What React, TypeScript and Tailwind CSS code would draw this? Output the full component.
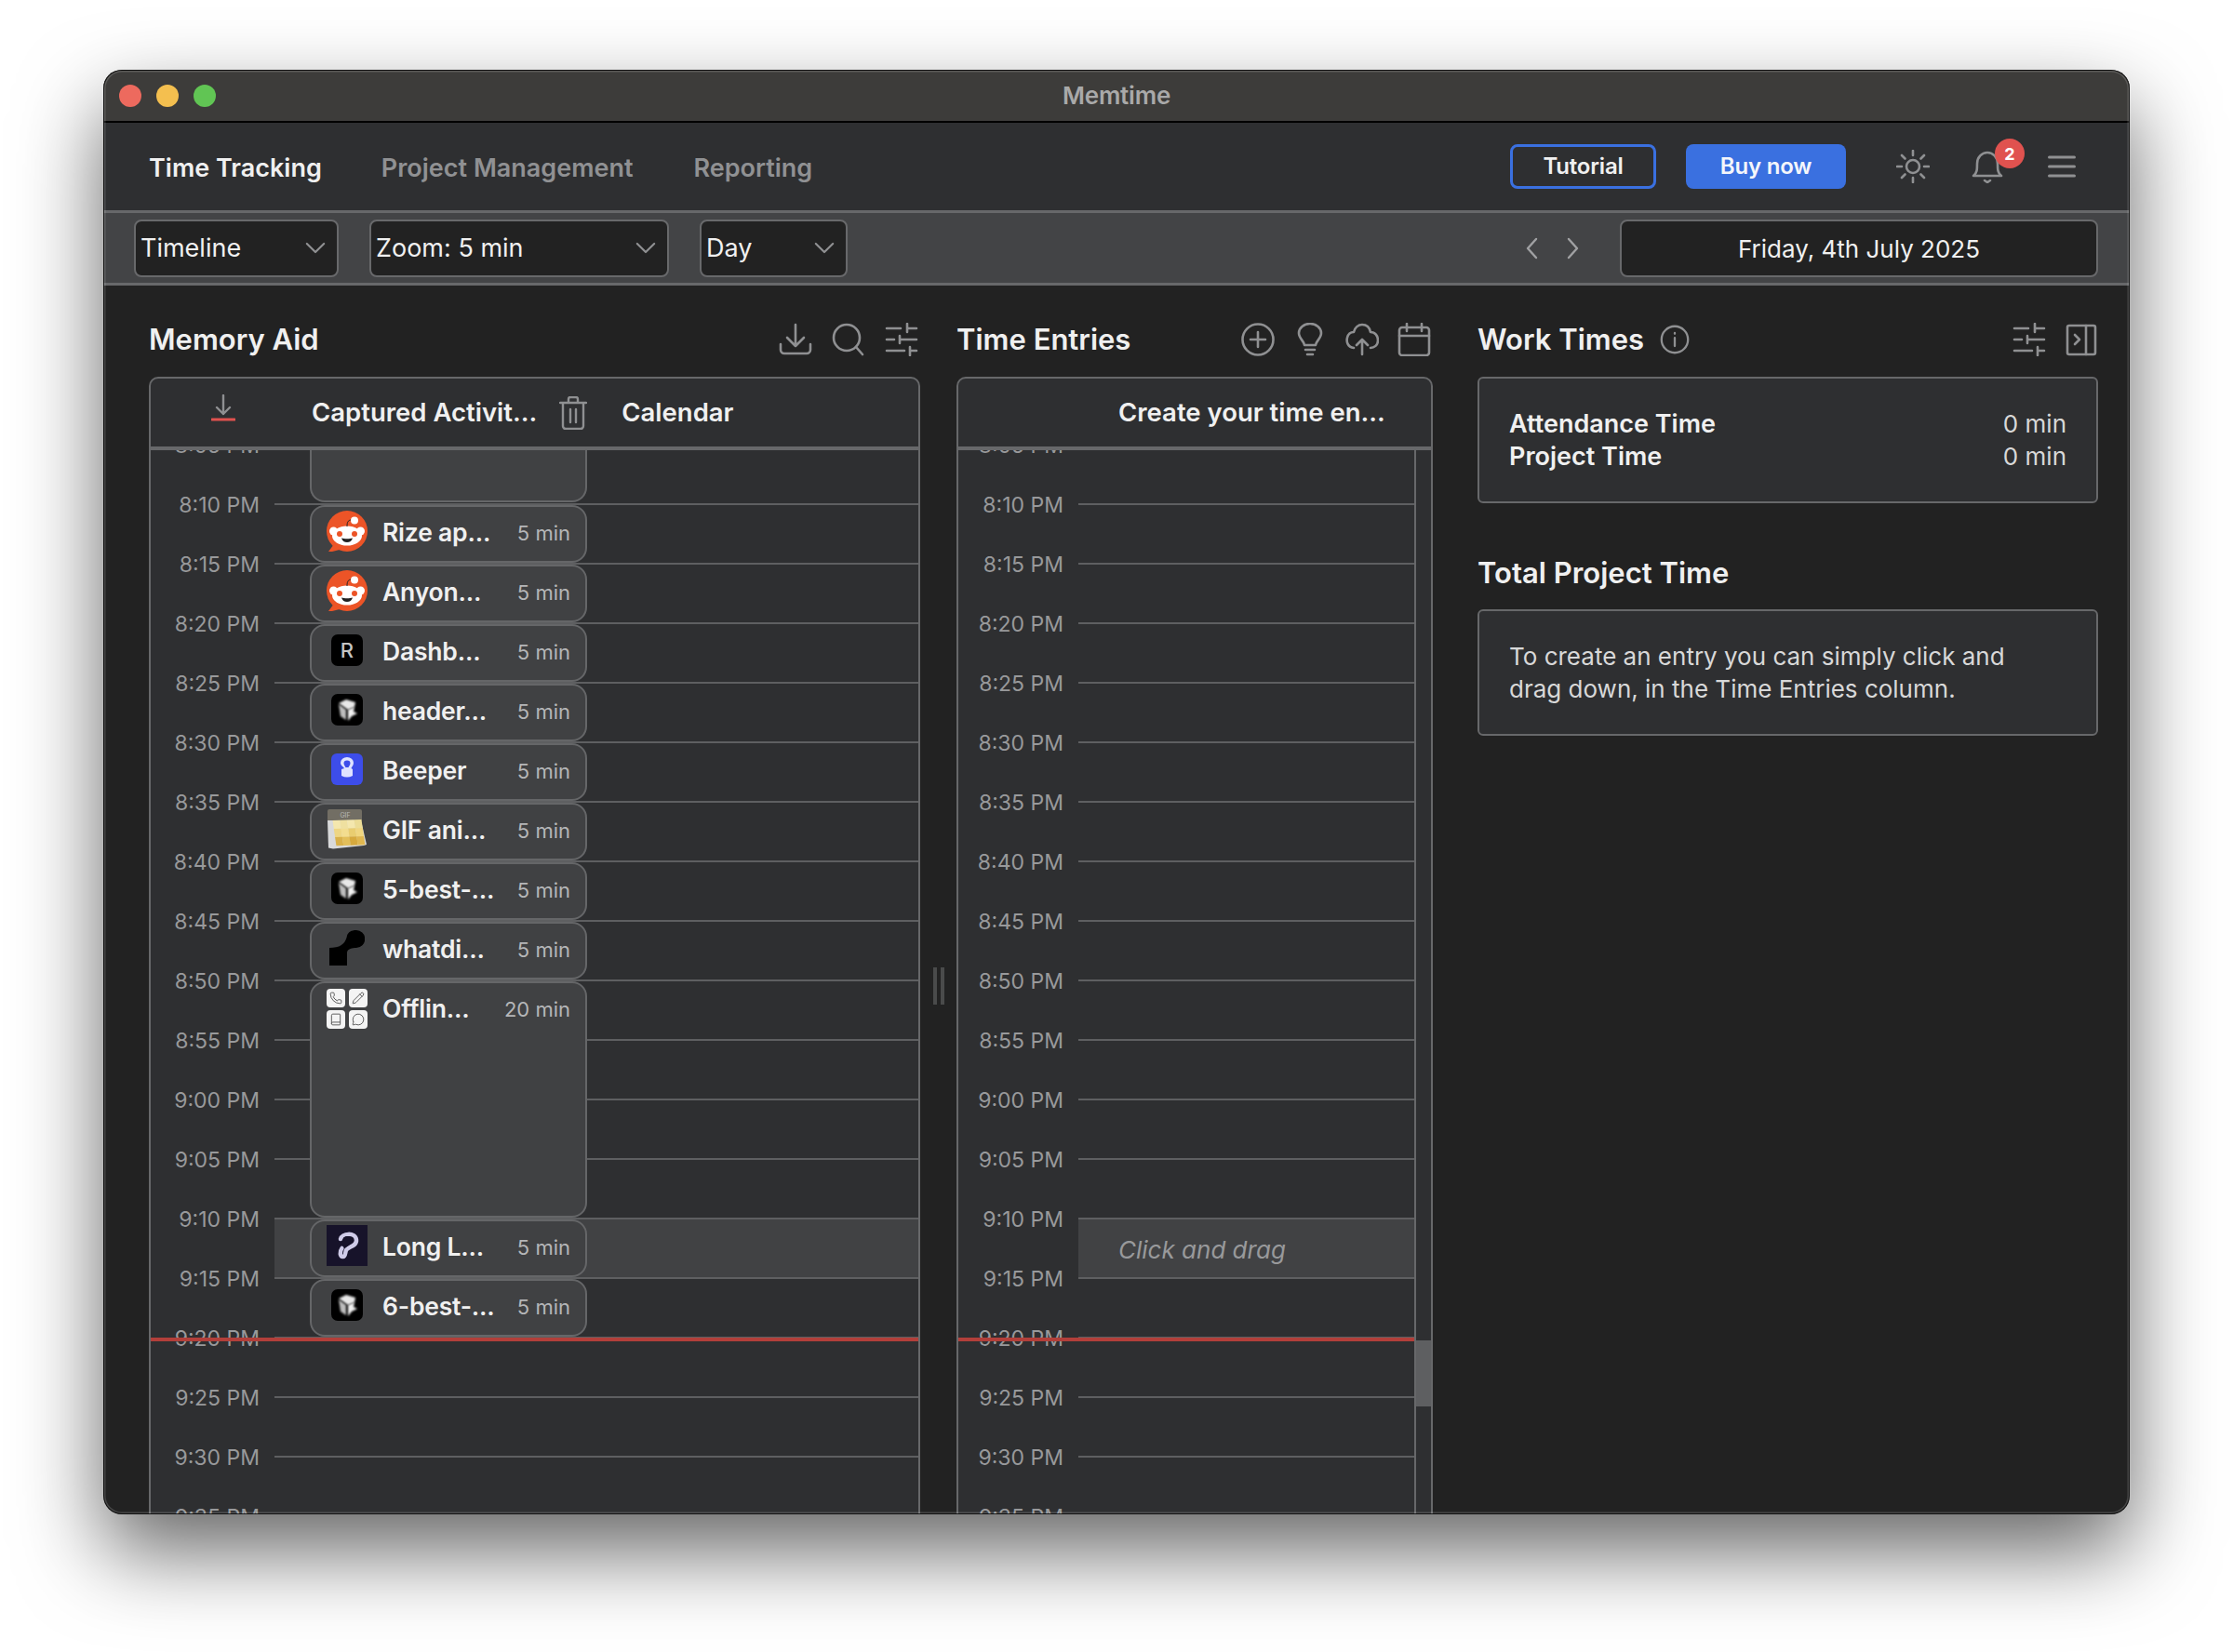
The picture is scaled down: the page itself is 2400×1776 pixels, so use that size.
import { ReactNode } from 'react';
import { Book, MessageCircle, Pencil, Phone } from 'lucide-react';

const FONT = "font-['Inter','Noto_Sans',sans-serif]";

const times = [
  '8:05 PM', '8:10 PM', '8:15 PM', '8:20 PM', '8:25 PM', '8:30 PM', '8:35 PM', '8:40 PM', '8:45 PM', '8:50 PM',
  '8:55 PM', '9:00 PM', '9:05 PM', '9:10 PM', '9:15 PM', '9:20 PM', '9:25 PM', '9:30 PM', '9:35 PM',
];

// pixel colours of the tilted page in the GIF app icon
const gifCells = [
  ['#f4e7ae', '#efe0a0', '#f4e7ae', '#ecdc96'],
  ['#eed684', '#f3dd8f', '#e9cd70', '#f0d680'],
  ['#d9b14a', '#e3bf5a', '#d6a93d', '#e0b750'],
];

function Svg({ children, className = 'w-9 h-9' }: { children: ReactNode; className?: string }) {
  return (
    <svg viewBox="0 0 36 36" fill="none" stroke="#8f9092" strokeWidth={2.6} strokeLinecap="round" strokeLinejoin="round" className={className}>
      {children}
    </svg>
  );
}

function SlidersIcon() {
  return (
    <Svg>
      <path d="M2 6h15M24 6h10M24 1v9M2 18h8M16 18h18M16 14v8M2 30h19M27 30h7M27 26v9" />
    </Svg>
  );
}

function DownloadIcon() {
  return (
    <Svg>
      <path d="M18 2v23M9 16l9 9 9-9M2 23v6a4 4 0 0 0 4 4h24a4 4 0 0 0 4-4v-6" />
    </Svg>
  );
}

function SearchIcon() {
  return (
    <Svg>
      <circle cx="16" cy="16" r="14" />
      <path d="M26 26l7 8" />
    </Svg>
  );
}

function ChevronDownIcon() {
  return (
    <svg viewBox="0 0 24 14" fill="none" stroke="#8f9092" strokeWidth={2.4} strokeLinecap="round" strokeLinejoin="round" className="w-[22px] h-[13px]">
      <path d="M2 2l10 10L22 2" />
    </svg>
  );
}

function Select({ label, width }: { label: string; width: string }) {
  return (
    <div className={`${width} h-[62px] flex items-center justify-between pl-[5px] pr-3 rounded-lg bg-[#222222] border-2 border-[#68696b] text-[27px] text-[#f0f0f0]`}>
      <span className="pt-[2px]">{label}</span>
      <ChevronDownIcon />
    </div>
  );
}

function RedditIcon() {
  return (
    <svg viewBox="0 0 44 44" className="w-11 h-11 shrink-0">
      <circle cx="22" cy="22" r="22" fill="#ec5427" />
      <path d="M2 44l6-8 6 6-8 2z" fill="#ec5427" />
      <circle cx="7.500" cy="22" r="4.500" fill="#fff" />
      <circle cx="36.500" cy="22" r="4.500" fill="#fff" />
      <ellipse cx="22" cy="27" rx="16" ry="10.500" fill="#fff" />
      <path d="M22 17c0-5 1-8 8-7" stroke="#222" strokeWidth="1" fill="none" />
      <circle cx="30" cy="10.500" r="4" fill="#fff" />
      <circle cx="14" cy="25" r="3" fill="#ec5427" />
      <circle cx="30" cy="25" r="3" fill="#ec5427" />
      <path d="M16 29.500c3 1 9 1 12 0-1 3-3 4.500-6 4.500s-5-1.500-6-4.500z" fill="#222" />
    </svg>
  );
}

function CubeIcon() {
  return (
    <div className="w-11 h-11 shrink-0 flex items-center justify-center">
      <svg viewBox="0 0 34 34" className="w-[34px] h-[34px]">
        <rect width="34" height="34" rx="7" fill="#000" />
        <path d="M8 10l8-4 10 3-1 5-7 3z" fill="#e8e8e8" className="blur-[0.8px]" />
        <path d="M8 11l8 6v11l-6-4z" fill="#bdbdbd" className="blur-[0.8px]" />
        <path d="M18 17l7-3-1 5 4 2-6 3-4 5z" fill="#f0f0f0" className="blur-[0.8px]" />
      </svg>
    </div>
  );
}

function AppIcon({ kind }: { kind: string }) {
  if (kind === 'reddit') return <RedditIcon />;
  if (kind === 'cube') return <CubeIcon />;
  if (kind === 'rize') {
    return (
      <div className="w-11 h-11 shrink-0 flex items-center justify-center">
        <div className="w-[34px] h-[34px] rounded-[7px] bg-black text-[#c4c4c4] text-[22px] font-medium flex items-center justify-center">R</div>
      </div>
    );
  }
  if (kind === 'beeper') {
    return (
      <svg viewBox="0 0 44 44" className="w-11 h-11 shrink-0">
        <rect x="5" y="5" width="34" height="34" rx="6" fill="#3d4dea" />
        <path d="M15 15a7 6 0 0 1 14 0c0 3-2 4-2.500 6l1.500 1v7c-4 2-8 2-12 0v-7l3-1c-1-2-4-3-4-6z" fill="#dfe3ff" />
        <path d="M18.500 15.500a3.500 3 0 0 1 7 0c0 2-1.500 3-2 4.500h-3c-.5-1.500-2-2.500-2-4.500z" fill="#3d4dea" />
      </svg>
    );
  }
  if (kind === 'gif') {
    return (
      <svg viewBox="0 0 44 44" className="w-11 h-11 shrink-0">
        <path d="M1 13h36l6 26-3 1-33 3.500-5-1z" fill="#d9dadb" />
        <path d="M1 3a2 2 0 0 1 2-2h33a2 2 0 0 1 2 2v10H1z" fill="#726e64" />
        <text x="20" y="10" fontSize="7" fill="#b9b9b6" textAnchor="middle" fontFamily="Inter, sans-serif">GIF</text>
        <g transform="matrix(7.700 -0.250 1.300 9 6.500 13)">
          {gifCells.map((row, y) => row.map((fill, x) => <rect key={`${x}-${y}`} x={x} y={y} width="1.020" height="1.020" fill={fill} />))}
        </g>
      </svg>
    );
  }
  if (kind === 'whatdid') {
    return (
      <div className="w-11 h-11 shrink-0 flex items-center justify-center">
        <svg viewBox="0 0 38 38" className="w-[38px] h-[38px]">
          <path d="M0 19c10 0 17-3 19-13 1-4 5-6 9.500-6a9.500 9.500 0 0 1 .5 19c-4 0-10 1-10 5v14H0z" fill="#000" />
        </svg>
      </div>
    );
  }
  if (kind === 'offline') {
    const tiles = [Phone, Pencil, Book, MessageCircle];
    return (
      <div className="w-11 h-11 shrink-0 grid grid-cols-2 gap-[3px] content-start mt-[2px]">
        {tiles.map((Tile, i) => (
          <div key={i} className="w-[20px] h-[20px] rounded-[4px] bg-[#f4f4f4] flex items-center justify-center">
            <Tile size={14} color="#555" strokeWidth={1.6} />
          </div>
        ))}
      </div>
    );
  }
  return (
    <svg viewBox="0 0 44 44" className="w-11 h-11 shrink-0">
      <rect width="44" height="44" fill="#17132a" />
      <path d="M15 15c1-6 16-8 17 1 .6 7-9 7-11 11-1 2-.5 7-3.500 7-3 0-4-5-1-9" stroke="#cfcbe8" strokeWidth="4.500" fill="none" strokeLinecap="round" />
      <path d="M19 14c3-2 8-1 8 2.500S22 21 19.500 24" stroke="#17132a" strokeWidth="1.800" fill="none" strokeLinecap="round" />
    </svg>
  );
}

function Block({ name, dur, icon, height }: { name: string; dur: string; icon: string; height: string }) {
  return (
    <div className={`${height} mb-[2px] rounded-[16px] border-2 border-[#656668] bg-[#404143] pl-[16px] pr-[16px] pt-[4px] flex items-start gap-[16px]`}>
      <AppIcon kind={icon} />
      <div className="h-11 mt-[2px] flex-1 flex items-center justify-between whitespace-nowrap">
        <span className="text-[26.500px] font-semibold text-[#f0f0f0] tracking-[-0.2px]">{name}</span>
        <span className="text-[22px] text-[#b5b6b8]">{dur}</span>
      </div>
    </div>
  );
}

function TimeRows({ gutter, pad }: { gutter: string; pad: string }) {
  return (
    <div className="-mt-[7px]">
      {times.map((t) => (
        <div key={t} className="flex h-[64px]">
          <div className={`${gutter} ${pad} shrink-0 text-right text-[23px] leading-[34px] -mt-[15px] text-[#98999b]`}>{t}</div>
          <div className={`flex-1 border-t-2 border-[#5e5f61] ${t === '9:10 PM' ? 'bg-[#414244]' : ''}`} />
        </div>
      ))}
    </div>
  );
}

function RedLine() {
  return <div className="absolute left-0 right-0 top-[954px] h-[4px] bg-[#b23f3a]" />;
}

function PanelHead({ children }: { children: ReactNode }) {
  return (
    <div className="h-[79px] shrink-0 rounded-t-[10px] border-2 border-b-4 border-[#67686a] bg-[#2e2f31] flex items-center text-[27.500px] font-semibold text-[#f0f0f0] whitespace-nowrap">
      {children}
    </div>
  );
}

function Heading({ children }: { children: ReactNode }) {
  return <h2 className="text-[31px] font-semibold text-[#f0f0f0]">{children}</h2>;
}

export default function App() {
  return (
    <div className={`${FONT} h-[1776px] w-[2400px] bg-white overflow-hidden pl-[111px] pt-[75px]`}>
      <div className="relative w-[2178px] h-[1553px] rounded-[20px] overflow-hidden flex flex-col bg-[#222222] shadow-[0_40px_90px_rgba(0,0,0,0.6)]">
        {/* Title bar */}
        <div className="h-[57px] shrink-0 bg-[#3d3c3a] border-b-2 border-black relative flex items-center justify-center">
          <div className="absolute left-[17px] flex gap-[16px]">
            <span className="w-6 h-6 rounded-full bg-[#ed6a5e]" />
            <span className="w-6 h-6 rounded-full bg-[#f4bf4f]" />
            <span className="w-6 h-6 rounded-full bg-[#61c554]" />
          </div>
          <span className="text-[26px] font-semibold text-[#a9a9a9] tracking-[-0.2px]">Memtime</span>
        </div>

        {/* Nav */}
        <div className="h-[94px] shrink-0 bg-[#2e2f31] flex items-center pl-[49px] pr-[58px] text-[27px] font-semibold">
          <span className="pt-[5px] text-[#f0f0f0]">Time Tracking</span>
          <span className="pt-[5px] ml-[64px] text-[#909193]">Project Management</span>
          <span className="pt-[5px] ml-[65px] text-[#909193]">Reporting</span>
          <div className="ml-auto flex items-center">
            <button className="w-[157px] h-[48px] rounded-lg border-[3px] border-[#3a70e0] text-[24px] tracking-[-0.2px] text-[#f0f0f0]">Tutorial</button>
            <button className="ml-[32px] w-[172px] h-[48px] rounded-lg bg-[#3a70e0] text-[24px] tracking-[-0.2px] text-[#f4f6fb]">Buy now</button>
            <div className="ml-[54px]">
              <Svg>
                <circle cx="18" cy="18" r="7" />
                <path d="M18 1v5M18 30v5M1 18h5M30 18h5M6 6l3.500 3.500M26.500 26.500L30 30M6 30l3.500-3.500M26.500 9.500L30 6" />
              </Svg>
            </div>
            <div className="relative ml-[44px]">
              <Svg>
                <path d="M3 28c4-3 4-7 4-13 0-7 5-12 11-12s11 5 11 12c0 6 0 10 4 13zM15 33l3 2 3-2" />
              </Svg>
              <span className="absolute -top-[12px] left-[26px] w-8 h-8 rounded-full bg-[#e0524f] text-white text-[18px] font-bold flex items-center justify-center">2</span>
            </div>
            <svg viewBox="0 0 30 24" className="ml-[47px] w-[30px] h-[24px]" stroke="#8f9092" strokeWidth={3} strokeLinecap="round">
              <path d="M1.500 2h27M1.500 12h27M1.500 22h27" />
            </svg>
          </div>
        </div>

        {/* Toolbar */}
        <div className="h-[81px] shrink-0 bg-[#434446] border-y-[3px] border-[#67686a] flex items-center pl-[33px] pr-[34px]">
          <div className="flex gap-[33px]">
            <Select label="Timeline" width="w-[220px]" />
            <Select label="Zoom: 5 min" width="w-[322px]" />
            <Select label="Day" width="w-[159px]" />
          </div>
          <div className="ml-auto flex items-center">
            <svg viewBox="0 0 60 26" className="w-[60px] h-[26px]" fill="none" stroke="#a0a1a3" strokeWidth={2.4} strokeLinecap="round" strokeLinejoin="round">
              <path d="M12 3L3 13l9 10M47 3l9 10-9 10" />
            </svg>
            <div className="ml-[42px] w-[514px] h-[62px] pt-[1px] rounded-lg bg-[#222222] border-2 border-[#68696b] flex items-center justify-center text-[26px] text-[#f0f0f0]">
              Friday, 4th July 2025
            </div>
          </div>
        </div>

        {/* Main */}
        <div className="flex-1 min-h-0 flex pl-[49px] pr-[34px]">
          {/* Memory Aid */}
          <div className="w-[829px] flex flex-col min-h-0">
            <div className="h-[98px] shrink-0 pt-[18px] flex items-center">
              <Heading>Memory Aid</Heading>
              <div className="ml-auto flex items-center gap-[21px] mr-[2px]">
                <DownloadIcon />
                <SearchIcon />
                <SlidersIcon />
              </div>
            </div>
            <PanelHead>
              <svg viewBox="0 0 26 30" className="ml-[65px] mb-[10px] w-[26px] h-[30px]" fill="none" strokeWidth={2.4} strokeLinecap="round" strokeLinejoin="round">
                <path d="M13 1v20M6 14l7 7 7-7" stroke="#8f9092" />
                <path d="M1 27h24" stroke="#e0524f" strokeWidth={3} />
              </svg>
              <span className="ml-[82px]">Captured Activit...</span>
              <svg viewBox="0 0 30 36" className="ml-[24px] w-[30px] h-[36px]" fill="none" stroke="#8f9092" strokeWidth={2.4} strokeLinecap="round" strokeLinejoin="round">
                <path d="M1 7h28M10 7V3a2 2 0 0 1 2-2h6a2 2 0 0 1 2 2v4M4 7v25a3 3 0 0 0 3 3h16a3 3 0 0 0 3-3V7M12 14v14M18 14v14" />
              </svg>
              <span className="ml-[37px]">Calendar</span>
            </PanelHead>
            <div className="relative flex-1 min-h-0 overflow-hidden border-x-2 border-[#67686a] bg-[#2e2f31]">
              <TimeRows gutter="w-[133px]" pad="pr-[16px]" />
              <div className="absolute left-[171px] top-0 w-[298px]">
                <div className="h-[58px] -mt-[2px] mb-[3px] rounded-b-[16px] border-2 border-t-0 border-[#656668] bg-[#404143]" />
                <Block name="Rize ap..." dur="5 min" icon="reddit" height="h-[62px]" />
                <Block name="Anyon..." dur="5 min" icon="reddit" height="h-[62px]" />
                <Block name="Dashb..." dur="5 min" icon="rize" height="h-[62px]" />
                <Block name="header..." dur="5 min" icon="cube" height="h-[62px]" />
                <Block name="Beeper" dur="5 min" icon="beeper" height="h-[62px]" />
                <Block name="GIF ani..." dur="5 min" icon="gif" height="h-[62px]" />
                <Block name="5-best-..." dur="5 min" icon="cube" height="h-[62px]" />
                <Block name="whatdi..." dur="5 min" icon="whatdid" height="h-[62px]" />
                <Block name="Offlin..." dur="20 min" icon="offline" height="h-[254px]" />
                <Block name="Long L..." dur="5 min" icon="long" height="h-[62px]" />
                <Block name="6-best-..." dur="5 min" icon="cube" height="h-[62px]" />
              </div>
              <RedLine />
            </div>
          </div>

          {/* Resize handle */}
          <div className="w-[39px] shrink-0 flex justify-center">
            <div className="mt-[733px] w-[12px] h-[40px] border-x-[4px] border-[#4a4b4b]" />
          </div>

          {/* Time Entries */}
          <div className="w-[512px] flex flex-col min-h-0">
            <div className="h-[98px] shrink-0 pt-[18px] flex items-center">
              <Heading>Time Entries</Heading>
              <div className="ml-auto flex items-center gap-[20px] mr-[2px]">
                <Svg>
                  <circle cx="18" cy="18" r="16.500" />
                  <path d="M18 10v16M10 18h16" />
                </Svg>
                <Svg>
                  <path d="M12 24c0-4-6-7-6-13a12 10 0 0 1 24 0c0 6-6 9-6 13zM13 29h10M15 34h6" />
                </Svg>
                <Svg>
                  <path d="M9 27C2 26 1 20 2 16c1-4 4-6 7-6 1-5 5-8 9-8 5 0 8 3 9 8 5 0 8 4 8 9s-4 8-8 8M18 34V18M12 24l6-6 6 6" />
                </Svg>
                <Svg>
                  <rect x="2" y="5" width="32" height="30" rx="3" />
                  <path d="M2 14h32M10 1v8M26 1v8" />
                </Svg>
              </div>
            </div>
            <PanelHead>
              <span className="ml-[172px]">Create your time en...</span>
            </PanelHead>
            <div className="flex-1 min-h-0 flex border-x-2 border-[#67686a] bg-[#2e2f31]">
              <div className="relative flex-1 min-w-0 overflow-hidden border-r-2 border-[#67686a]">
                <TimeRows gutter="w-[129px]" pad="pr-[16px]" />
                <div className="absolute left-[129px] right-0 top-[827px] h-[64px] flex items-center pl-[43px] text-[26px] italic text-[#98999b]">
                  Click and drag
                </div>
                <RedLine />
              </div>
              <div className="w-[16px] shrink-0 relative">
                <div className="absolute inset-x-0 top-[957px] h-[71px] bg-[#5e5f61]" />
              </div>
            </div>
          </div>

          {/* Work Times */}
          <div className="ml-[48px] w-[667px] flex flex-col">
            <div className="h-[98px] shrink-0 pt-[18px] flex items-center">
              <Heading>Work Times</Heading>
              <Svg className="ml-[17px] w-8 h-8">
                <circle cx="18" cy="18" r="16" />
                <path d="M18 16v10M18 10v1" />
              </Svg>
              <div className="ml-auto flex items-center gap-[21px] mr-[1px]">
                <SlidersIcon />
                <svg viewBox="0 0 34 36" className="w-[34px] h-9" fill="none" stroke="#8f9092" strokeWidth={2.6} strokeLinecap="round" strokeLinejoin="round">
                  <rect x="2" y="3" width="30" height="31" rx="2" />
                  <path d="M22 3v31M10 13l5 5-5 5" />
                </svg>
              </div>
            </div>
            <div className="h-[136px] rounded-[6px] border-2 border-[#67686a] bg-[#2e2f31] px-[32px] flex flex-col justify-center text-[27px] leading-[35px]">
              <div className="flex justify-between">
                <span className="font-semibold text-[#f0f0f0]">Attendance Time</span>
                <span className="text-[26px] text-[#d8d8d8]">0 min</span>
              </div>
              <div className="flex justify-between">
                <span className="font-semibold text-[#f0f0f0]">Project Time</span>
                <span className="text-[26px] text-[#d8d8d8]">0 min</span>
              </div>
            </div>
            <div className="h-[114px] shrink-0 pt-[36px] flex items-center">
              <Heading>Total Project Time</Heading>
            </div>
            <div className="h-[136px] rounded-[6px] border-2 border-[#67686a] bg-[#2e2f31] px-[32px] flex items-center text-[26px] leading-[35px] text-[#d8d8d8]">
              <p>To create an entry you can simply click and<br />drag down, in the Time Entries column.</p>
            </div>
          </div>
        </div>

        {/* Window edge */}
        <div className="absolute inset-0 rounded-[20px] pointer-events-none shadow-[inset_0_0_0_1px_rgba(0,0,0,0.8),inset_0_0_0_2.500px_rgba(255,255,255,0.16)]" />
      </div>
    </div>
  );
}
